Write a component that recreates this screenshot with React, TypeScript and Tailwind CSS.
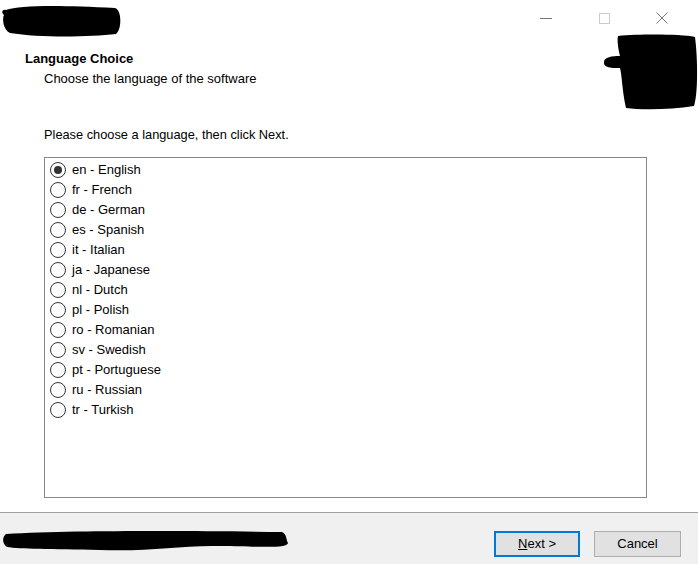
import React from "react";

const languages = [
  "en - English",
  "fr - French",
  "de - German",
  "es - Spanish",
  "it - Italian",
  "ja - Japanese",
  "nl - Dutch",
  "pl - Polish",
  "ro - Romanian",
  "sv - Swedish",
  "pt - Portuguese",
  "ru - Russian",
  "tr - Turkish",
];

export default function App() {
  const [selected, setSelected] = React.useState(0);

  return (
    <div className="relative w-[698px] h-[564px] bg-white flex flex-col text-[13px] text-black font-['Liberation_Sans',Arial,sans-serif] overflow-hidden">
      {/* title bar */}
      <div className="h-[36px] flex justify-end items-start pr-[7px]">
        <div className="w-[58px] h-[36px] flex items-center justify-center">
          <div className="w-[12px] h-px bg-[#777]" />
        </div>
        <div className="w-[58px] h-[36px] flex items-center justify-center">
          <div className="w-[11px] h-[11px] border border-[#ccc]" />
        </div>
        <div className="w-[58px] h-[36px] flex items-center justify-center">
          <svg width="12" height="12" viewBox="0 0 12 12">
            <path d="M0.5 0.5 L11.5 11.5 M11.5 0.5 L0.5 11.5" stroke="#777" strokeWidth="1" />
          </svg>
        </div>
      </div>

      {/* header */}
      <div className="pl-[25px] mt-[15px] leading-[16px]">
        <div className="font-bold">Language Choice</div>
        <div className="pl-[19px] mt-[4px]">Choose the language of the software</div>
      </div>

      {/* body */}
      <div className="pl-[44px] mt-[40px] leading-[16px] text-[12.8px]">Please choose a language, then click Next.</div>

      <div className="ml-[44px] mt-[14px] w-[603px] h-[341px] border border-[#828790] pt-[2px] pl-[5px]">
        {languages.map((lang, i) => (
          <label key={lang} className="flex items-center h-[20px] cursor-default" onClick={() => setSelected(i)}>
            <span className="w-[16px] h-[16px] rounded-full border border-[#333] flex items-center justify-center">
              {selected === i && <span className="w-[8px] h-[8px] rounded-full bg-[#333]" />}
            </span>
            <span className="ml-[6px]">{lang}</span>
          </label>
        ))}
      </div>

      {/* footer */}
      <div className="mt-[14px] flex-1 bg-[#f0f0f0] border-t border-[#a0a0a0] flex justify-end items-start pt-[18px] pr-[17px] gap-[14px]">
        <button className="w-[86px] h-[26px] bg-[#e1e1e1] border-2 border-[#0078d7] text-[13px]">
          <span className="underline">N</span>ext &gt;
        </button>
        <button className="w-[87px] h-[26px] bg-[#e1e1e1] border border-[#adadad] text-[13px]">Cancel</button>
      </div>

      {/* redactions */}
      <svg className="absolute left-0 top-0 pointer-events-none" width="698" height="564" viewBox="0 0 698 564">
        <path d="M6 10 C 20 5, 60 5, 115 8 C 122 10, 122 30, 116 34 C 90 37, 40 38, 10 33 C 3 30, 2 18, 4 15 C 1 13, 2 9, 6 10 Z" fill="#000" />
        <path d="M618 36 C 640 34, 680 34, 695 37 C 698 60, 698 95, 694 106 C 670 110, 640 110, 626 108 C 622 90, 622 75, 620 68 C 612 68, 603 68, 604 62 C 604 57, 612 56, 620 56 C 618 48, 617 40, 618 36 Z" fill="#000" />
        <path d="M6 534 C 80 530, 200 531, 282 532 C 287 534, 286 540, 288 543 C 287 548, 270 547, 220 546 C 180 545, 150 552, 100 550 C 50 549, 20 549, 7 547 C 2 544, 2 537, 6 534 Z" fill="#000" />
      </svg>
    </div>
  );
}
